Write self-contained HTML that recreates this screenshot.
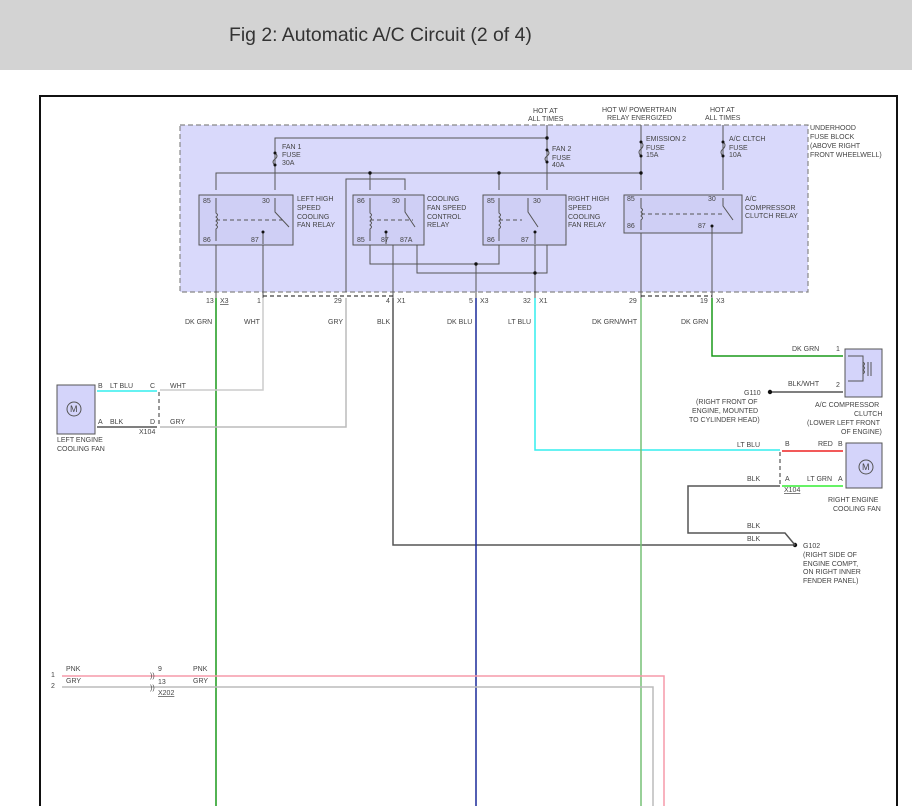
<!DOCTYPE html>
<html><head><meta charset="utf-8"><style>
body{margin:0;width:912px;height:806px;overflow:hidden;background:#fff;font-family:"Liberation Sans",sans-serif}
.hdr{position:absolute;left:0;top:0;width:912px;height:70px;background:#d3d3d3}
.hdr span{position:absolute;left:229px;top:24px;font-size:19.4px;color:#333}
svg{position:absolute;left:0;top:0}
text{font-family:"Liberation Sans",sans-serif;font-size:7px;fill:#444}
</style></head><body>
<div class="hdr"><span>Fig 2: Automatic A/C Circuit (2 of 4)</span></div>
<svg width="912" height="806" viewBox="0 0 912 806">
<rect x="40" y="96" width="857" height="720" fill="none" stroke="#111" stroke-width="2"/>
<rect x="180" y="125" width="628" height="167" fill="#d9d9fb" stroke="#888" stroke-width="1.2" stroke-dasharray="5,3"/>
<g stroke="#555" stroke-width="1" fill="none">
<polyline points="275,190 275,138 547,138"/>
<line x1="547" y1="125" x2="547" y2="190"/>
<line x1="641" y1="125" x2="641" y2="190"/>
<line x1="723" y1="125" x2="723" y2="190"/>
<polyline points="216,190 216,173 641,173"/>
<polyline points="346,292 346,179 405,179 405,190"/>
<line x1="370" y1="173" x2="370" y2="190"/>
<line x1="499" y1="173" x2="499" y2="190"/>
<rect x="199" y="195" width="94" height="50" fill="#cfcff5"/>
<rect x="353" y="195" width="71" height="50" fill="#cfcff5"/>
<rect x="483" y="195" width="83" height="50" fill="#cfcff5"/>
<rect x="624" y="195" width="118" height="38" fill="#cfcff5"/>
<line x1="216" y1="245" x2="216" y2="298"/>
<line x1="263" y1="245" x2="263" y2="298"/>
<polyline points="370,245 370,264 499,264 499,245"/>
<line x1="393" y1="245" x2="393" y2="298"/>
<polyline points="417,245 417,273 547,273 547,245"/>
<line x1="476" y1="264" x2="476" y2="298"/>
<line x1="535" y1="245" x2="535" y2="298"/>
<line x1="641" y1="233" x2="641" y2="298"/>
<line x1="712" y1="233" x2="712" y2="298"/>
<path d="M216 198v15q3 2 0 4q3 2 0 4q3 2 0 4q3 2 0 4v12M275 198v14l14 15M370 198v15q3 2 0 4q3 2 0 4q3 2 0 4q3 2 0 4v12M405 198v14l10 15M499 198v15q3 2 0 4q3 2 0 4q3 2 0 4q3 2 0 4v12M528 198v14l10 15M641 198v10q3 2 0 4q3 2 0 4q3 2 0 4v10M723 198v8l10 14"/>
<path d="M216 220H283M370 220H413M499 220H522M641 214H725" stroke-dasharray="4,3"/>
<path d="M263 232v12M386 232v12M535 232v12M712 226v7"/>
<path d="M275 153q4 3 0 6q-4 3 0 6M547 150q4 3 0 6q-4 3 0 6M641 142q4 3 0 7q-4 3 0 7M723 142q4 3 0 7q-4 3 0 7" stroke="#555"/>
</g>
<g fill="#111">
<circle cx="275" cy="153" r="1.5"/><circle cx="275" cy="165" r="1.5"/><circle cx="370" cy="173" r="1.7"/><circle cx="499" cy="173" r="1.7"/>
<circle cx="547" cy="138" r="1.7"/><circle cx="547" cy="150" r="1.5"/><circle cx="547" cy="162" r="1.5"/>
<circle cx="641" cy="142" r="1.5"/><circle cx="641" cy="156" r="1.5"/><circle cx="641" cy="173" r="1.7"/>
<circle cx="723" cy="142" r="1.5"/><circle cx="723" cy="156" r="1.5"/>
<circle cx="476" cy="264" r="1.7"/><circle cx="535" cy="273" r="1.7"/>
<circle cx="263" cy="232" r="1.5"/><circle cx="386" cy="232" r="1.5"/><circle cx="535" cy="232" r="1.5"/><circle cx="712" cy="226" r="1.5"/>
<circle cx="770" cy="392" r="2.2"/><circle cx="795" cy="545" r="2.2"/>
</g>
<path d="M263 296H393M641 296H712" stroke="#111" stroke-dasharray="4,3"/>
<g fill="none" stroke-width="1.5">
<line x1="216" y1="298" x2="216" y2="806" stroke="#1a9a1a"/>
<polyline points="263,298 263,390 160,390" stroke="#ccc"/>
<polyline points="346,298 346,427 160,427" stroke="#bbb"/>
<polyline points="393,298 393,545 795,545" stroke="#555"/>
<line x1="476" y1="298" x2="476" y2="806" stroke="#1a2a9a"/>
<polyline points="535,298 535,450 780,450" stroke="#33eeee"/>
<line x1="641" y1="298" x2="641" y2="806" stroke="#77c077"/>
<polyline points="712,298 712,356 843,356" stroke="#1a9a1a"/>
<line x1="782" y1="451" x2="843" y2="451" stroke="#ee2222"/>
<line x1="782" y1="486" x2="843" y2="486" stroke="#33ee33"/>
<polyline points="780,486 688,486 688,533 785,533 795,545" stroke="#555"/>
<line x1="772" y1="392" x2="843" y2="392" stroke="#555"/>
<line x1="97" y1="391" x2="157" y2="391" stroke="#33eeee"/>
<line x1="97" y1="427" x2="157" y2="427" stroke="#555"/>
<polyline points="62,676 664,676 664,806" stroke="#f59aaa"/>
<polyline points="62,687 653,687 653,806" stroke="#bbb"/>
</g>
<path d="M159 392V426M780 452V485" stroke="#333" stroke-dasharray="4,3"/>
<rect x="57" y="385" width="38" height="49" fill="#d4d4fa" stroke="#555"/>
<circle cx="74" cy="409" r="7" fill="#d4d4fa" stroke="#555"/><text x="70" y="412" style="font-size:9px">M</text>
<rect x="845" y="349" width="37" height="48" fill="#d4d4fa" stroke="#555"/>
<path d="M848 356h15v25h-15M863 362q3 2 0 4q3 2 0 4q3 2 0 4M868 362v14M871 362v14" stroke="#555" fill="none"/>
<rect x="846" y="443" width="36" height="45" fill="#d4d4fa" stroke="#555"/>
<circle cx="866" cy="467" r="7" fill="#d4d4fa" stroke="#555"/><text x="862" y="470" style="font-size:9px">M</text>
<text x="533" y="113">HOT AT</text><text x="528" y="121">ALL TIMES</text>
<text x="602" y="112">HOT W/ POWERTRAIN</text><text x="607" y="120">RELAY ENERGIZED</text>
<text x="710" y="112">HOT AT</text><text x="705" y="120">ALL TIMES</text>
<text x="810" y="130">UNDERHOOD</text><text x="810" y="139">FUSE BLOCK</text><text x="810" y="148">(ABOVE RIGHT</text><text x="810" y="157">FRONT WHEELWELL)</text>
<text x="282" y="149">FAN 1</text><text x="282" y="157">FUSE</text><text x="282" y="165">30A</text>
<text x="552" y="151">FAN 2</text><text x="552" y="160">FUSE</text><text x="552" y="167">40A</text>
<text x="646" y="141">EMISSION 2</text><text x="646" y="150">FUSE</text><text x="646" y="157">15A</text>
<text x="729" y="141">A/C CLTCH</text><text x="729" y="150">FUSE</text><text x="729" y="157">10A</text>
<text x="297" y="201">LEFT HIGH</text><text x="297" y="210">SPEED</text><text x="297" y="219">COOLING</text><text x="297" y="227">FAN RELAY</text>
<text x="427" y="201">COOLING</text><text x="427" y="210">FAN SPEED</text><text x="427" y="219">CONTROL</text><text x="427" y="227">RELAY</text>
<text x="568" y="201">RIGHT HIGH</text><text x="568" y="210">SPEED</text><text x="568" y="219">COOLING</text><text x="568" y="227">FAN RELAY</text>
<text x="745" y="201">A/C</text><text x="745" y="210">COMPRESSOR</text><text x="745" y="218">CLUTCH RELAY</text>
<text x="203" y="203">85</text><text x="262" y="203">30</text><text x="203" y="242">86</text><text x="251" y="242">87</text>
<text x="357" y="203">86</text><text x="392" y="203">30</text><text x="357" y="242">85</text><text x="381" y="242">87</text><text x="400" y="242">87A</text>
<text x="487" y="203">85</text><text x="533" y="203">30</text><text x="487" y="242">86</text><text x="521" y="242">87</text>
<text x="627" y="201">85</text><text x="708" y="201">30</text><text x="627" y="228">86</text><text x="698" y="228">87</text>
<text x="206" y="303">13</text><text x="220" y="303" text-decoration="underline">X3</text>
<text x="257" y="303">1</text><text x="334" y="303">29</text>
<text x="386" y="303">4</text><text x="397" y="303">X1</text>
<text x="469" y="303">5</text><text x="480" y="303">X3</text>
<text x="523" y="303">32</text><text x="539" y="303">X1</text>
<text x="629" y="303">29</text><text x="700" y="303">19</text><text x="716" y="303">X3</text>
<text x="185" y="324">DK GRN</text><text x="244" y="324">WHT</text><text x="328" y="324">GRY</text><text x="377" y="324">BLK</text>
<text x="447" y="324">DK BLU</text><text x="508" y="324">LT BLU</text><text x="592" y="324">DK GRN/WHT</text><text x="681" y="324">DK GRN</text>
<text x="98" y="388">B</text><text x="110" y="388">LT BLU</text><text x="150" y="388">C</text><text x="170" y="388">WHT</text>
<text x="98" y="424">A</text><text x="110" y="424">BLK</text><text x="150" y="424">D</text><text x="170" y="424">GRY</text>
<text x="139" y="434">X104</text>
<text x="57" y="442">LEFT ENGINE</text><text x="57" y="451">COOLING FAN</text>
<text x="792" y="351">DK GRN</text><text x="836" y="351">1</text>
<text x="788" y="386">BLK/WHT</text><text x="836" y="387">2</text>
<text x="744" y="395">G110</text><text x="696" y="404">(RIGHT FRONT OF</text><text x="692" y="413">ENGINE, MOUNTED</text><text x="689" y="422">TO CYLINDER HEAD)</text>
<text x="815" y="407">A/C COMPRESSOR</text><text x="854" y="416">CLUTCH</text><text x="807" y="425">(LOWER LEFT FRONT</text><text x="841" y="434">OF ENGINE)</text>
<text x="737" y="447">LT BLU</text><text x="785" y="446">B</text><text x="818" y="446">RED</text><text x="838" y="446">B</text>
<text x="747" y="481">BLK</text><text x="785" y="481">A</text><text x="807" y="481">LT GRN</text><text x="838" y="481">A</text>
<text x="784" y="492" text-decoration="underline">X104</text>
<text x="828" y="502">RIGHT ENGINE</text><text x="833" y="511">COOLING FAN</text>
<text x="747" y="528">BLK</text><text x="747" y="541">BLK</text>
<text x="803" y="548">G102</text><text x="803" y="557">(RIGHT SIDE OF</text><text x="803" y="566">ENGINE COMPT,</text><text x="803" y="574">ON RIGHT INNER</text><text x="803" y="583">FENDER PANEL)</text>
<text x="51" y="677">1</text><text x="51" y="688">2</text>
<text x="66" y="671">PNK</text><text x="66" y="683">GRY</text>
<text x="158" y="671">9</text><text x="158" y="684">13</text><text x="158" y="695" text-decoration="underline">X202</text>
<text x="193" y="671">PNK</text><text x="193" y="683">GRY</text>
<text x="150" y="678">))</text><text x="150" y="690">))</text>
</svg>
</body></html>
